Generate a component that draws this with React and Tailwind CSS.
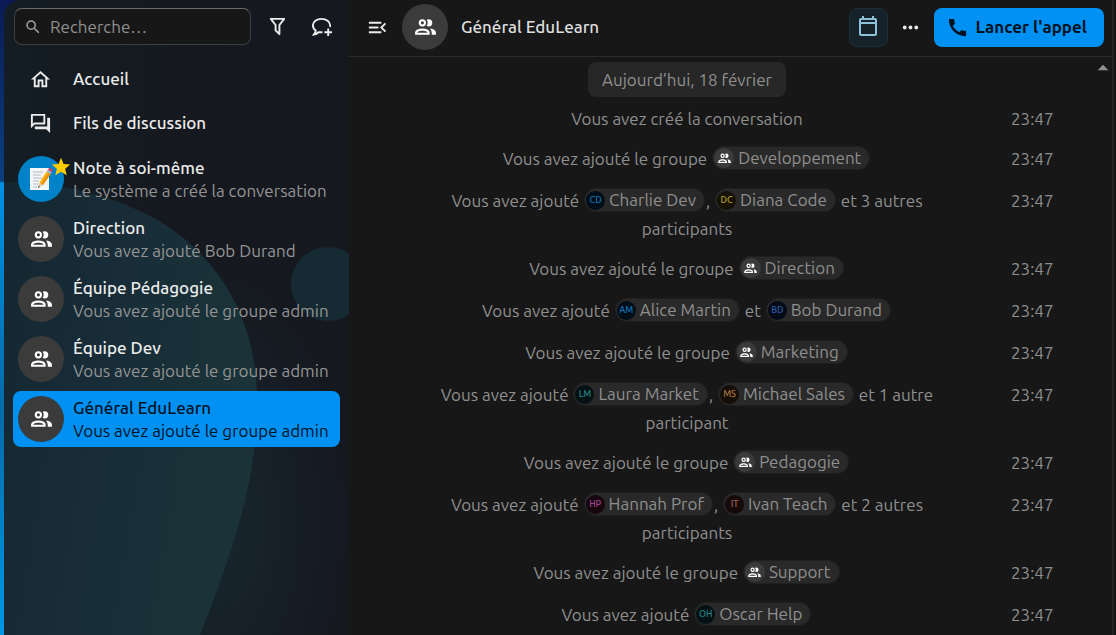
import {
  MdArrowDropUp,
  MdCall,
  MdMenuOpen,
  MdMoreHoriz,
  MdOutlineForum,
  MdSearch,
  MdStar,
} from 'react-icons/md'

const conversations = [
  { name: 'Note à soi-même', last: 'Le système a créé la conversation', note: true },
  { name: 'Direction', last: 'Vous avez ajouté Bob Durand' },
  { name: 'Équipe Pédagogie', last: 'Vous avez ajouté le groupe admin' },
  { name: 'Équipe Dev', last: 'Vous avez ajouté le groupe admin' },
  { name: 'Général EduLearn', last: 'Vous avez ajouté le groupe admin', active: true },
]

const colors = {
  blue: 'bg-[#000e1a] text-[#1a74b8]',
  yellow: 'bg-[#151204] text-[#b5a136]',
  navy: 'bg-[#040b16] text-[#2f5ba8]',
  teal: 'bg-[#041214] text-[#2d8288]',
  orange: 'bg-[#150d06] text-[#b07c46]',
  pink: 'bg-[#16060f] text-[#a3478a]',
  red: 'bg-[#160b0a] text-[#a96358]',
}

const messages = [
  ['Vous avez créé la conversation'],
  ['Vous avez ajouté le groupe ', { group: 'Developpement' }],
  ['Vous avez ajouté ', { user: 'Charlie Dev', initials: 'CD', color: 'blue' }, ', ', { user: 'Diana Code', initials: 'DC', color: 'yellow' }, ' et 3 autres participants'],
  ['Vous avez ajouté le groupe ', { group: 'Direction' }],
  ['Vous avez ajouté ', { user: 'Alice Martin', initials: 'AM', color: 'blue' }, ' et ', { user: 'Bob Durand', initials: 'BD', color: 'navy' }],
  ['Vous avez ajouté le groupe ', { group: 'Marketing' }],
  ['Vous avez ajouté ', { user: 'Laura Market', initials: 'LM', color: 'teal' }, ', ', { user: 'Michael Sales', initials: 'MS', color: 'orange' }, ' et 1 autre participant'],
  ['Vous avez ajouté le groupe ', { group: 'Pedagogie' }],
  ['Vous avez ajouté ', { user: 'Hannah Prof', initials: 'HP', color: 'pink' }, ', ', { user: 'Ivan Teach', initials: 'IT', color: 'red' }, ' et 2 autres participants'],
  ['Vous avez ajouté le groupe ', { group: 'Support' }],
  ['Vous avez ajouté ', { user: 'Oscar Help', initials: 'OH', color: 'teal' }],
]

function GroupIcon({ className }) {
  return (
    <svg viewBox="0 0 24 24" className={className} fill="currentColor">
      <path d="M13.07 10.41A5 5 0 0 0 13.07 4.59A3.39 3.39 0 0 1 15 4A3.5 3.5 0 0 1 15 11A3.39 3.39 0 0 1 13.07 10.41M5.5 7.5A3.5 3.5 0 1 1 9 11A3.5 3.5 0 0 1 5.5 7.5M7.5 7.5A1.5 1.5 0 1 0 9 6A1.5 1.5 0 0 0 7.5 7.5M16 17V19H2V17S2 13 9 13 16 17 16 17M14 17C13.86 16.22 12.67 15 9 15S4.07 16.31 4 17M15.95 13A5.32 5.32 0 0 1 18 17V19H22V17S22 13.37 15.94 13Z" />
    </svg>
  )
}

function HomeIcon() {
  return (
    <svg viewBox="0 0 24 24" className="size-[23px]" fill="currentColor">
      <path d="M12 5.69L17 10.19V18H15V12H9V18H7V10.19L12 5.69M12 3L2 12H5V20H11V14H13V20H19V12H22" />
    </svg>
  )
}

function CalendarIcon() {
  return (
    <svg viewBox="0 0 24 24" className="size-6" fill="currentColor">
      <path d="M19 3H18V1H16V3H8V1H6V3H5C3.89 3 3 3.9 3 5V19A2 2 0 0 0 5 21H19A2 2 0 0 0 21 19V5A2 2 0 0 0 19 3M19 19H5V9H19V19M19 7H5V5H19V7Z" />
    </svg>
  )
}

function FilterIcon() {
  return (
    <svg viewBox="0 0 24 24" className="size-[23px]" fill="currentColor">
      <path d="M15,19.88C15.04,20.18 14.94,20.5 14.71,20.71C14.32,21.1 13.69,21.1 13.3,20.71L9.29,16.7C9.06,16.47 8.96,16.16 9,15.87V10.75L4.21,4.62C3.87,4.19 3.95,3.56 4.38,3.22C4.57,3.08 4.78,3 5,3H19C19.22,3 19.43,3.08 19.62,3.22C20.05,3.56 20.13,4.19 19.79,4.62L15,10.75V19.88M7.04,5L11,10.06V15.58L13,17.58V10.05L16.96,5H7.04Z" />
    </svg>
  )
}

function ChatPlusIcon() {
  return (
    <svg viewBox="0 0 24 24" className="size-[23px]" fill="none" stroke="currentColor" strokeWidth="2">
      <path d="M20.8 12.4C21 11.9 21 11.4 21 10.8C21 7 17 4 12 4S3 7 3 10.8C3 13.2 4.1 15 6 16.3C6 17.6 5.3 19 4.2 20.3C6 20.1 7.7 19.3 9 18H13" />
      <path d="M19 14V22M15 18H23" />
    </svg>
  )
}

function NoteIcon() {
  return (
    <svg viewBox="0 0 24 24" className="size-6">
      <path d="M1 1H20V23H1Z" fill="#f4f5f6" />
      <path d="M4 5H14M4 8H12M4 11H13M4 14H10M4 17H9M4 20H8" stroke="#b4bac0" strokeWidth="1" />
      <path d="M9 21L10.5 15.5L14 18Z" fill="#e8c9a0" />
      <path d="M9 21L9.6 18.8L11 19.8Z" fill="#3c3c3c" />
      <path d="M10.5 15.5L17.5 4.5L21.5 7.2L14 18Z" fill="#fbb117" />
      <path d="M12.3 16.8L19.5 5.9L21.5 7.2L14 18Z" fill="#e78f0c" />
      <path d="M17.5 4.5L18.8 2.5L22.8 5.2L21.5 7.2Z" fill="#9fb6c3" />
      <path d="M18.8 2.5C19.6 1 21 .8 22.3 1.8C23.6 2.6 23.8 3.8 22.8 5.2Z" fill="#e2415a" />
    </svg>
  )
}

function Backdrop() {
  return (
    <svg
      className="absolute inset-0 -z-10 h-full w-full"
      viewBox="0 0 345 635"
      preserveAspectRatio="xMinYMin slice"
      aria-hidden="true"
    >
      <defs>
        <linearGradient id="blob" x1="0" y1="0" x2="1" y2="0.3">
          <stop offset="0" stopColor="#142731" />
          <stop offset="0.5" stopColor="#182d38" />
          <stop offset="1" stopColor="#1a3338" />
        </linearGradient>
        <linearGradient id="base" x1="0" y1="0" x2="1" y2="0">
          <stop offset="0" stopColor="#131d23" />
          <stop offset="0.5" stopColor="#15191f" />
          <stop offset="1" stopColor="#161820" />
        </linearGradient>
        <radialGradient id="glow" cx="0.6" cy="0.82" r="0.4">
          <stop offset="0" stopColor="#17272e" />
          <stop offset="1" stopColor="#17272e" stopOpacity="0" />
        </radialGradient>
      </defs>
      <rect width="345" height="635" fill="url(#base)" />
      <rect width="345" height="635" fill="url(#glow)" />
      <path d="M0 182C60 182 110 197 150 218C215 255 253 320 253 400C253 480 231 545 196 635H0Z" fill="url(#blob)" />
      <circle cx="324" cy="284" r="37" fill="#162a34" />
    </svg>
  )
}

function Avatar({ note }) {
  if (note) {
    return (
      <span className="relative flex size-[46px] shrink-0 items-center justify-center rounded-full bg-[#0082c9]">
        <NoteIcon />
        <MdStar className="absolute top-0 -right-2 size-[22px] text-[#ffcc00]" />
      </span>
    )
  }
  return (
    <span className="flex size-[46px] shrink-0 items-center justify-center rounded-full bg-[#3b3b3b] text-white">
      <GroupIcon className="size-[25px]" />
    </span>
  )
}

function Mention({ part }) {
  return (
    <span className="mx-px mb-1 inline-flex h-6 items-center gap-1 rounded-full border border-[#202020] bg-[#292929] pr-2 pl-px align-top whitespace-nowrap">
      {part.group ? (
        <span className="flex size-5 items-center justify-center rounded-full bg-[#3b3b3b] text-white">
          <GroupIcon className="size-[15px]" />
        </span>
      ) : (
        <span className={`flex size-[19px] items-center justify-center rounded-full text-[9px] font-medium ${colors[part.color]}`}>
          {part.initials}
        </span>
      )}
      {part.group || part.user}
    </span>
  )
}

function Sidebar() {
  return (
    <aside className="relative isolate flex w-[345px] shrink-0 flex-col overflow-hidden rounded-tl-2xl">
      <Backdrop />
      <div className="flex items-center pt-2 pl-2.5">
        <label className="flex h-[37px] w-[237px] items-center gap-2 rounded-lg border border-[#3c3e40] border-t-[#6a6a6a] bg-[#171717] pl-[9px]">
          <MdSearch className="size-[18px] text-[#a0a0a0]" />
          <input
            type="text"
            aria-label="Recherche"
            placeholder="Recherche…"
            className="min-w-0 flex-1 bg-transparent text-[#ebebeb] outline-none placeholder:text-[#8f8f8f]"
          />
        </label>
        <button type="button" aria-label="Filtrer" className="ml-1 flex h-9 w-11 items-center justify-center text-[#ebebeb]">
          <FilterIcon />
        </button>
        <button type="button" aria-label="Nouvelle conversation" className="flex h-9 w-11 items-center justify-center text-[#ebebeb]">
          <ChatPlusIcon />
        </button>
      </div>

      <nav className="pt-3 pl-[25px] font-medium text-[#ebebeb]">
        <a href="#accueil" className="flex h-11 items-center gap-[21px]">
          <HomeIcon />
          Accueil
        </a>
        <a href="#fils" className="flex h-11 items-center gap-[21px]">
          <MdOutlineForum className="size-[23px]" />
          Fils de discussion
        </a>
      </nav>

      <ul className="flex flex-col gap-1 pt-1.5 pr-[9px] pl-[9px]">
        {conversations.map((c) => (
          <li key={c.name}>
            <a
              href="#conversation"
              className={`flex h-14 items-center gap-[9px] rounded-lg pl-[5px] ${c.active ? 'bg-[#0091f2] text-[#00121f]' : 'text-[#949494]'}`}
            >
              <Avatar note={c.note} />
              <span className="flex min-w-0 flex-col leading-[23px] whitespace-nowrap">
                <span className={`font-medium ${c.active ? '' : 'text-[#ebebeb]'}`}>{c.name}</span>
                <span>{c.last}</span>
              </span>
            </a>
          </li>
        ))}
      </ul>
    </aside>
  )
}

function Header() {
  return (
    <header className="flex h-[57px] shrink-0 items-center border-b border-[#2b2b2b] pr-2 pb-0.5 pl-[17px]">
      <button type="button" aria-label="Replier la liste" className="text-[#ebebeb]">
        <MdMenuOpen className="size-[23px]" />
      </button>
      <span className="ml-[13px] flex">
        <Avatar />
      </span>
      <h1 className="ml-[13px] flex-1 font-medium text-[#dedede]">Général EduLearn</h1>
      <button
        type="button"
        aria-label="Calendrier"
        className="flex size-[39px] items-center justify-center rounded-lg border border-[#1d2e38] bg-[#15222a] text-[#8fc0dc]"
      >
        <CalendarIcon />
      </button>
      <button type="button" aria-label="Plus d'options" className="flex w-[46px] justify-center text-[#ebebeb]">
        <MdMoreHoriz className="size-[23px]" />
      </button>
      <button
        type="button"
        className="flex h-[39px] items-center gap-[7px] rounded-lg bg-[#0091f2] pr-[17px] pl-3 font-bold whitespace-nowrap text-[#00121f]"
      >
        <MdCall className="size-[23px]" />
        Lancer l'appel
      </button>
    </header>
  )
}

export default function App() {
  return (
    <div className="flex h-screen overflow-hidden bg-[linear-gradient(to_bottom,#0a1a55_0%,#0a4080_28.5%,#0090e4_28.8%,#006bab_65%,#0097e8_100%)] pl-1 font-[Ubuntu,'Noto_Sans',sans-serif] text-[17px]">
      <Sidebar />
      <main className="flex min-w-0 flex-1 flex-col border-r-2 border-[#242424] bg-[#171717]">
        <Header />
        <section className="relative min-h-0 flex-1 overflow-hidden pt-[5px] text-[#8f8f8f]">
          <MdArrowDropUp className="absolute -top-0.5 -right-1 size-[26px]" />
          <div className="flex pr-[175px] pb-0.5 pl-[88px]">
            <h2 className="mx-auto flex h-[35px] items-center rounded-lg bg-[#272727] px-3.5">Aujourd’hui, 18 février</h2>
          </div>
          <ul>
            {messages.map((parts, i) => (
              <li key={i} className="flex items-start py-[7px] pl-[88px] leading-[26px]">
                <p className="min-w-0 flex-1 text-center">
                  {parts.map((part, j) => (typeof part === 'string' ? part : <Mention key={j} part={part} />))}
                </p>
                <time className="w-[175px] shrink-0 pl-[74px]">23:47</time>
              </li>
            ))}
          </ul>
        </section>
      </main>
      <div className="w-0.5 shrink-0 bg-[#121212]" />
    </div>
  )
}
